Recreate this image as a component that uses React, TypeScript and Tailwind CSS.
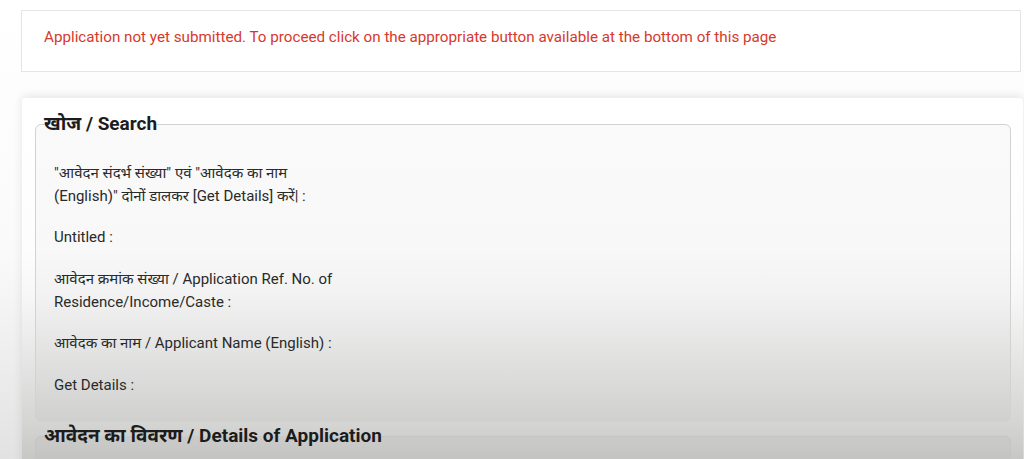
import React from "react";

export default function App() {
  const font = { fontFamily: "Roboto, 'Noto Sans', 'Noto Sans Devanagari', 'Lohit Devanagari', sans-serif" };
  return (
    <div
      className="w-[1024px] h-[459px] overflow-hidden bg-[linear-gradient(to_bottom,#ffffff_0%,#fafafa_55%,#e2e2e2_100%)] pt-[10px] pl-[21px] pr-[1px] text-[#222]"
      style={font}
    >
      <div className="mr-[2px] h-[62px] border border-[#e4e4e4] bg-white pl-[22px] pt-[16px]">
        <p className="text-[15.2px] leading-[20px] text-[#d8382c]">
          Application not yet submitted. To proceed click on the appropriate button available at the bottom of this page
        </p>
      </div>

      <div className="mt-[26px] ml-[1px] rounded-t-[4px] bg-[linear-gradient(to_bottom,#ffffff_0%,#fcfdfc_40%,#f6f7f6_52%,#d4d5d3_86%,#c0c1bf_100%)] pl-[13px] pr-[12px] pt-[14px] shadow-[0_-2px_10px_rgba(0,0,0,0.10)] h-[380px]">
        <fieldset className="rounded-[6px] border border-[#d2d3d1] bg-[rgba(0,0,0,0.02)] px-[9px] pb-[24px]">
          <legend className="-ml-[1px] text-[19px] font-bold leading-[24px] text-[#1c1c1c]">खोज / Search</legend>
          <div className="pl-[9px] pt-[26px] text-[15px] leading-[23px] text-[#2a2a2a]">
            <p>
              "आवेदन संदर्भ संख्या" एवं "आवेदक का नाम
              <br />
              (English)" दोनों डालकर [Get Details] करें| :
            </p>
            <p className="mt-[18px]">Untitled :</p>
            <p className="mt-[19px]">
              आवेदन क्रमांक संख्या / Application Ref. No. of
              <br />
              Residence/Income/Caste :
            </p>
            <p className="mt-[18px]">आवेदक का नाम / Applicant Name (English) :</p>
            <p className="mt-[19px]">Get Details :</p>
          </div>
        </fieldset>
        <fieldset className="mt-[2px] rounded-[6px] border border-[#c4c5c3] bg-[rgba(0,0,0,0.02)] px-[9px] pb-[24px]">
          <legend className="-ml-[1px] text-[19px] font-bold leading-[24px] text-[#1c1c1c]">
            आवेदन का विवरण / Details of Application
          </legend>
          <div className="h-[40px]" />
        </fieldset>
      </div>
    </div>
  );
}
